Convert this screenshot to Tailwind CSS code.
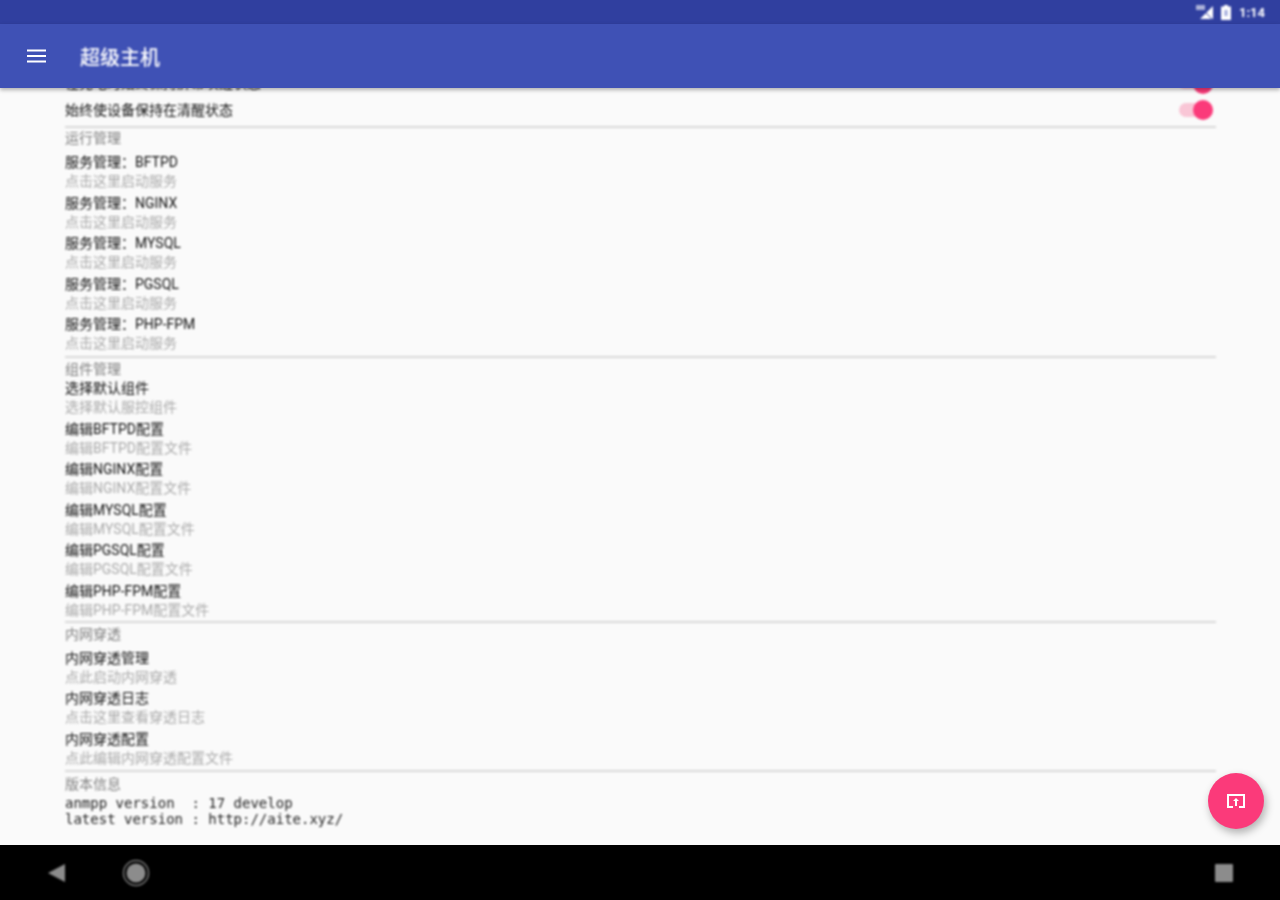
<!doctype html>
<html lang="zh">
  <head>
    <meta charset="UTF-8" />
    <title>超级主机</title>
    <script src="https://cdn.jsdelivr.net/npm/@tailwindcss/browser@4"></script>
  </head>
  <body class="w-[1280px] h-[900px] overflow-hidden bg-[#fafafa] font-['Roboto','Noto_Sans_CJK_SC',sans-serif]">
    <div class="relative flex flex-col h-[900px]">

      <!-- status bar -->
      <div class="h-6 shrink-0 bg-[#303f9f] flex items-center justify-end pr-[15px] text-white">
        <svg width="18" height="16" viewBox="0 0 18 16" class="blur-[0.8px]">
          <path d="M17 2 V15 H4 Z" fill="#ffffff"/>
          <path d="M0 1 h9 v5 h-9 z" fill="#ffffff" opacity="0.6"/>
          <path d="M9 8 l7 7" stroke="#303f9f" stroke-width="1"/>
        </svg>
        <svg width="10" height="15" viewBox="0 0 10 15" class="ml-[7px] blur-[0.8px]">
          <path d="M3 0 h4 v1.500 h3 v13.500 h-10 v-13.500 h3 z" fill="#ffffff"/>
          <path d="M3.500 5 h3 v6 h-3 z" fill="#9fa8da"/>
        </svg>
        <span class="ml-2 text-[13px] font-bold leading-none blur-[0.8px]">1:14</span>
      </div>

      <!-- app bar -->
      <div class="h-16 shrink-0 bg-[#3f51b5] flex items-center pl-[27px] shadow-[0_2px_4px_rgba(0,0,0,0.3)] z-10">
        <svg width="19" height="14" viewBox="0 0 19 14" class="blur-[0.5px]">
          <path d="M0 0.500 h19 v2 h-19 z M0 6 h19 v2 h-19 z M0 11.500 h19 v2 h-19 z" fill="#ffffff"/>
        </svg>
        <span class="ml-[34px] pt-[3px] text-[20px] font-medium leading-none text-white blur-[0.8px]">超级主机</span>
      </div>

      <!-- settings list -->
      <div class="flex-1 min-h-0 overflow-hidden pl-[65px] pr-[64px] text-[14px]">
        <div class="blur-[0.8px]">
          <div class="-mt-[18px]">
            <div class="h-[27px] flex items-center justify-between text-[#111]">
              <span>在充电时始终保持屏幕唤醒状态</span>
              <div class="relative w-[34px] h-2.5 mr-[3px] rounded-full bg-[#f9c6d6]">
                <div class="absolute right-[0px] -top-[5px] w-5 h-5 rounded-full bg-[#fb3a7a]"></div>
              </div>
            </div>
            <div class="h-[26px] flex items-center justify-between text-[#111]">
              <span>始终使设备保持在清醒状态</span>
              <div class="relative w-[34px] h-3.5 mr-[3px] rounded-full bg-[#f9c6d6]">
                <div class="absolute right-[0px] -top-[3px] w-5 h-5 rounded-full bg-[#fb3a7a]"></div>
              </div>
            </div>
          </div>

          <div class="mt-[3px] h-0.5 bg-[#d9d9d9]"></div>
          <p class="h-[23px] leading-[21px] text-[#808080]">运行管理</p>
          <div class="h-[40.500px] leading-[19px] pt-[2px]"><p class="text-[#111]">服务管理：BFTPD</p><p class="text-[#aaa]">点击这里启动服务</p></div>
          <div class="h-[40.500px] leading-[19px] pt-[2px]"><p class="text-[#111]">服务管理：NGINX</p><p class="text-[#aaa]">点击这里启动服务</p></div>
          <div class="h-[40.500px] leading-[19px] pt-[2px]"><p class="text-[#111]">服务管理：MYSQL</p><p class="text-[#aaa]">点击这里启动服务</p></div>
          <div class="h-[40.500px] leading-[19px] pt-[2px]"><p class="text-[#111]">服务管理：PGSQL</p><p class="text-[#aaa]">点击这里启动服务</p></div>
          <div class="h-[42.500px] leading-[19px] pt-[2px]"><p class="text-[#111]">服务管理：PHP-FPM</p><p class="text-[#aaa]">点击这里启动服务</p></div>

          <div class="h-0.5 bg-[#d9d9d9]"></div>
          <p class="h-[21.500px] leading-[23px] text-[#808080]">组件管理</p>
          <div class="h-[40.500px] leading-[19px]"><p class="text-[#111]">选择默认组件</p><p class="text-[#aaa]">选择默认服控组件</p></div>
          <div class="h-[40.500px] leading-[19px]"><p class="text-[#111]">编辑BFTPD配置</p><p class="text-[#aaa]">编辑BFTPD配置文件</p></div>
          <div class="h-[40.500px] leading-[19px]"><p class="text-[#111]">编辑NGINX配置</p><p class="text-[#aaa]">编辑NGINX配置文件</p></div>
          <div class="h-[40.500px] leading-[19px]"><p class="text-[#111]">编辑MYSQL配置</p><p class="text-[#aaa]">编辑MYSQL配置文件</p></div>
          <div class="h-[40.500px] leading-[19px]"><p class="text-[#111]">编辑PGSQL配置</p><p class="text-[#aaa]">编辑PGSQL配置文件</p></div>
          <div class="h-[39.500px] leading-[19px]"><p class="text-[#111]">编辑PHP-FPM配置</p><p class="text-[#aaa]">编辑PHP-FPM配置文件</p></div>

          <div class="h-0.5 bg-[#d9d9d9]"></div>
          <p class="h-[23.500px] leading-[23px] text-[#808080]">内网穿透</p>
          <div class="h-[40.500px] leading-[19px] pt-[2px]"><p class="text-[#111]">内网穿透管理</p><p class="text-[#aaa]">点此启动内网穿透</p></div>
          <div class="h-[40.500px] leading-[19px] pt-[2px]"><p class="text-[#111]">内网穿透日志</p><p class="text-[#aaa]">点击这里查看穿透日志</p></div>
          <div class="h-[42.500px] leading-[19px] pt-[2px]"><p class="text-[#111]">内网穿透配置</p><p class="text-[#aaa]">点此编辑内网穿透配置文件</p></div>

          <div class="h-0.5 bg-[#d9d9d9]"></div>
          <p class="h-[23px] leading-[25px] text-[#808080]">版本信息</p>
          <pre class="font-['DejaVu_Sans_Mono',monospace] text-[14px] leading-[16px] text-[#222]">anmpp version  : 17 develop
latest version : http://aite.xyz/</pre>
        </div>
      </div>

      <!-- navigation bar -->
      <div class="h-[55px] shrink-0 bg-black flex items-center pl-[47px] pr-[47px]">
        <svg width="19" height="20" viewBox="0 0 19 20" class="blur-[0.8px]">
          <path d="M18 1 V19 L1 10 Z" fill="#8c8c8c"/>
        </svg>
        <svg width="28" height="28" viewBox="0 0 28 28" class="ml-[56px] blur-[0.8px]">
          <circle cx="14" cy="14" r="12.500" fill="none" stroke="#777777" stroke-width="1.500"/>
          <circle cx="14" cy="14" r="9.500" fill="#8c8c8c"/>
        </svg>
        <div class="ml-auto w-[18px] h-[18px] bg-[#8c8c8c] rounded-[1px] blur-[0.8px]"></div>
      </div>

      <!-- floating action button -->
      <div class="absolute left-[1208px] top-[773px] w-14 h-14 rounded-full bg-[#fb3a7a] shadow-[2px_4px_8px_rgba(0,0,0,0.3)] flex items-center justify-center">
        <svg width="20" height="18" viewBox="0 0 20 18" class="blur-[0.5px]">
          <path d="M1 2 H19 V16 H13 V14 H17 V4 H3 V14 H7 V16 H1 Z" fill="#ffffff"/>
          <path d="M10 6 L13 9 H11 V14 H9 V9 H7 Z" fill="#ffffff"/>
        </svg>
      </div>
    </div>
  </body>
</html>
